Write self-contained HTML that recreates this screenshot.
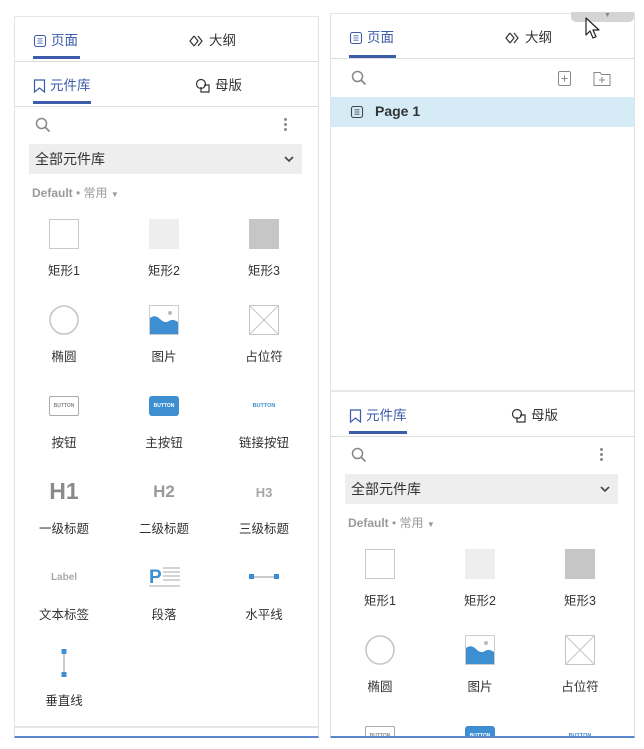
<!DOCTYPE html>
<html><head><meta charset="utf-8"><style>
*{margin:0;padding:0;box-sizing:border-box}
html,body{width:644px;height:749px;overflow:hidden}
body{background:#fff;position:relative;font-family:"Liberation Sans","Noto Sans CJK SC",sans-serif;color:#333}
.abs{position:absolute}
.panel{position:absolute;border-left:1px solid #e2e2e2;border-right:1px solid #e2e2e2;border-top:1px solid #e6e6e6;overflow:hidden}
.tabs{position:absolute;left:0;width:304px;height:45px;border-bottom:1px solid #ddd}
.tab{position:absolute;top:15px;font-size:13.5px;line-height:18px;display:flex;align-items:center;gap:4px}
.tab.on{color:#3c5ba8}
.ul{position:absolute;top:39px;height:3px;background:#3c5ba8}
.lbl{position:absolute;width:100px;text-align:center;font-size:12.5px;color:#333}
.ic{position:absolute}
</style></head><body>

<!-- LEFT PANEL -->
<div class="panel" style="left:14px;top:16px;width:305px;height:722px;border-bottom:2px solid #5b86c9">
  <div class="tabs" style="top:0">
    <div class="tab on" style="left:18px"><svg width="14" height="14" viewBox="0 0 14 14"><rect x="1.5" y="1.5" width="11" height="11" rx="2" fill="none" stroke="#3c5ba8" stroke-width="1.1"/><path d="M4.5 4.8h5M4.5 7h5M4.5 9.2h5" stroke="#3c5ba8" stroke-width="0.8"/></svg>页面</div>
    <div class="ul" style="left:18px;width:47px"></div>
    <div class="tab" style="left:174px"><svg width="16" height="12" viewBox="0 0 16 12"><path d="M5 1L1 6l4 5M9 1l4 5-4 5M5 1l4 5-4 5" fill="none" stroke="#333" stroke-width="1.2"/></svg>大纲</div>
  </div>
  <div style="position:absolute;left:0;top:45px;width:304px;height:665px">
    <div class="tabs" style="top:0">
      <div class="tab on" style="left:18px"><svg width="13" height="14" viewBox="0 0 13 14"><path d="M1.5 1h10v12l-5-4-5 4z" fill="none" stroke="#3c5ba8" stroke-width="1.2"/></svg>元件库</div>
      <div class="ul" style="left:18px;width:58px"></div>
      <div class="tab" style="left:180px"><svg width="16" height="16" viewBox="0 0 16 16"><circle cx="6" cy="6" r="4.5" fill="none" stroke="#333" stroke-width="1.2"/><path d="M6 9v5h8V7h-5" fill="none" stroke="#333" stroke-width="1.2"/></svg>母版</div>
    </div>
    LIBL
  </div>
  <div class="abs" style="left:0;top:709px;width:304px;height:2px;background:#e6e6e6"></div>
</div>

<!-- RIGHT PANEL -->
<div class="panel" style="left:330px;top:13px;width:305px;height:725px;border-bottom:2px solid #5b86c9">
  <div class="tabs" style="top:0">
    <div class="tab on" style="left:18px"><svg width="14" height="14" viewBox="0 0 14 14"><rect x="1.5" y="1.5" width="11" height="11" rx="2" fill="none" stroke="#3c5ba8" stroke-width="1.1"/><path d="M4.5 4.8h5M4.5 7h5M4.5 9.2h5" stroke="#3c5ba8" stroke-width="0.8"/></svg>页面</div>
    <div class="ul" style="left:18px;width:47px;top:41px"></div>
    <div class="tab" style="left:174px"><svg width="16" height="12" viewBox="0 0 16 12"><path d="M5 1L1 6l4 5M9 1l4 5-4 5M5 1l4 5-4 5" fill="none" stroke="#333" stroke-width="1.2"/></svg>大纲</div>
  </div>
  <svg class="ic" style="left:20px;top:56px" width="16" height="16" viewBox="0 0 16 16"><circle cx="6.5" cy="6.5" r="5" fill="none" stroke="#888" stroke-width="1.5"/><path d="M10 10l4.5 4.5" stroke="#888" stroke-width="1.7"/></svg>
  <svg class="ic" style="left:227px;top:57px" width="13" height="15" viewBox="0 0 13 15"><rect x="0.5" y="0.5" width="12" height="14" rx="1.5" fill="none" stroke="#888"/><path d="M6.5 4.5v6M3.5 7.5h6" stroke="#888"/></svg>
  <svg class="ic" style="left:262px;top:57px" width="18" height="15" viewBox="0 0 18 15"><path d="M1 1.5h6l1.5 2H17v11H1z" fill="none" stroke="#888"/><path d="M9 6v6M6 9h6" stroke="#888"/></svg>
  <div class="abs" style="left:0;top:83px;width:304px;height:30px;background:#d5ecf7"></div>
  <svg class="ic" style="left:19px;top:91px" width="14" height="14" viewBox="0 0 14 14"><rect x="1.5" y="1.5" width="11" height="11" rx="2" fill="none" stroke="#444" stroke-width="1.1"/><path d="M4.5 4.8h5M4.5 7h5M4.5 9.2h5" stroke="#444" stroke-width="0.8"/></svg>
  <div class="abs" style="left:44px;top:89px;font-size:14px;font-weight:bold;color:#333">Page 1</div>
  <div class="abs" style="left:0;top:376px;width:304px;height:2px;background:#e8e8e8"></div>
  <div style="position:absolute;left:0;top:378px;width:304px;height:345px;overflow:hidden">
    <div class="tabs" style="top:0">
      <div class="tab on" style="left:18px"><svg width="13" height="14" viewBox="0 0 13 14"><path d="M1.5 1h10v12l-5-4-5 4z" fill="none" stroke="#3c5ba8" stroke-width="1.2"/></svg>元件库</div>
      <div class="ul" style="left:18px;width:58px"></div>
      <div class="tab" style="left:180px"><svg width="16" height="16" viewBox="0 0 16 16"><circle cx="6" cy="6" r="4.5" fill="none" stroke="#333" stroke-width="1.2"/><path d="M6 9v5h8V7h-5" fill="none" stroke="#333" stroke-width="1.2"/></svg>母版</div>
    </div>
    LIBR
  </div>
</div>
<div class="abs" style="left:571px;top:12px;width:63px;height:10px;background:#d4d4d4;border-radius:0 0 5px 5px;font-size:7px;color:#888;text-align:center;line-height:8px;padding-left:10px">▼</div>
<svg class="abs" style="left:585px;top:17px" width="16" height="24" viewBox="0 0 16 24"><path d="M1 1v17l4-4 3 7 3-1.3-3-6.7h6z" fill="#fff" stroke="#222" stroke-width="1.2" stroke-linejoin="round"/></svg>

<script>
var lib=`
<svg class="ic" style="left:20px;top:55px" width="16" height="16" viewBox="0 0 16 16"><circle cx="6.5" cy="6.5" r="5" fill="none" stroke="#888" stroke-width="1.5"/><path d="M10 10l4.5 4.5" stroke="#888" stroke-width="1.7"/></svg>
<div class="abs" style="left:269px;top:56px;width:3px;height:3px;border-radius:50%;background:#888;box-shadow:0 5px 0 #888,0 10px 0 #888"></div>
<div class="abs" style="left:14px;top:82px;width:273px;height:30px;background:#eeeeee;font-size:14px;line-height:30px;padding-left:6px;color:#333">全部元件库<svg style="position:absolute;right:8px;top:12px" width="10" height="7" viewBox="0 0 10 7"><path d="M1 1l4 4 4-4" fill="none" stroke="#444" stroke-width="1.6"/></svg></div>
<div class="abs" style="left:17px;top:122px;font-size:12px;font-weight:bold;color:#9a9a9a">Default <span style="font-weight:normal">• 常用 <span style="font-size:8px">▼</span></span></div>
<div class="abs" style="left:34px;top:157px;width:30px;height:30px;border:1px solid #c8c8c8"></div>
<div class="abs" style="left:134px;top:157px;width:30px;height:30px;background:#eeeeee"></div>
<div class="abs" style="left:234px;top:157px;width:30px;height:30px;background:#c6c6c6"></div>
<div class="lbl" style="left:-1px;top:198px">矩形1</div><div class="lbl" style="left:99px;top:198px">矩形2</div><div class="lbl" style="left:199px;top:198px">矩形3</div>
<svg class="ic" style="left:34px;top:243px" width="30" height="30"><circle cx="15" cy="15" r="14" fill="none" stroke="#c6c6c6" stroke-width="1.6"/></svg>
<svg class="ic" style="left:134px;top:243px" width="30" height="30" viewBox="0 0 30 30"><rect x="0.5" y="0.5" width="29" height="29" fill="#fff" stroke="#ccc"/><path d="M1 13c4-3 7-2 10 1s6 4 9 2 6-1 9 1v12H1z" fill="#3d8fd1"/><circle cx="21" cy="8" r="2" fill="#bbb"/></svg>
<svg class="ic" style="left:234px;top:243px" width="30" height="30" viewBox="0 0 30 30"><rect x="0.5" y="0.5" width="29" height="29" fill="none" stroke="#c6c6c6"/><path d="M1 1l28 28M29 1L1 29" stroke="#c6c6c6"/></svg>
<div class="lbl" style="left:-1px;top:284px">椭圆</div><div class="lbl" style="left:99px;top:284px">图片</div><div class="lbl" style="left:199px;top:284px">占位符</div>
<div class="abs" style="left:34px;top:334px;width:30px;height:20px;border:1px solid #aaa;border-radius:2px;font-size:5px;color:#888;text-align:center;line-height:18px;font-weight:bold">BUTTON</div>
<div class="abs" style="left:134px;top:334px;width:30px;height:20px;background:#3d8fd1;border-radius:3px;font-size:5px;color:#fff;text-align:center;line-height:20px;font-weight:bold">BUTTON</div>
<div class="abs" style="left:234px;top:334px;width:30px;height:20px;font-size:5.5px;color:#3d8fd1;text-align:center;line-height:20px;font-weight:bold">BUTTON</div>
<div class="lbl" style="left:-1px;top:370px">按钮</div><div class="lbl" style="left:99px;top:370px">主按钮</div><div class="lbl" style="left:199px;top:370px">链接按钮</div>
<div class="abs" style="left:-1px;top:416px;width:100px;text-align:center;font-size:23px;font-weight:bold;color:#8a8a8a">H1</div>
<div class="abs" style="left:99px;top:420px;width:100px;text-align:center;font-size:17px;font-weight:bold;color:#9a9a9a">H2</div>
<div class="abs" style="left:199px;top:423px;width:100px;text-align:center;font-size:13px;font-weight:bold;color:#a5a5a5">H3</div>
<div class="lbl" style="left:-1px;top:456px">一级标题</div><div class="lbl" style="left:99px;top:456px">二级标题</div><div class="lbl" style="left:199px;top:456px">三级标题</div>
<div class="abs" style="left:-1px;top:510px;width:100px;text-align:center;font-size:10px;font-weight:bold;color:#aaa">Label</div>
<svg class="ic" style="left:134px;top:504px" width="31" height="24" viewBox="0 0 31 24"><text x="0" y="17" font-family="Liberation Sans" font-weight="bold" font-size="19" fill="#3d8fd1">P</text><path d="M14 2h17M14 6h17M14 10h17M14 14h17M0 20h31" stroke="#aaa" stroke-width="0.9"/></svg>
<svg class="ic" style="left:234px;top:510px" width="30" height="10"><path d="M3 5h24" stroke="#999"/><rect x="0" y="2" width="5" height="5" fill="#3d8fd1"/><rect x="25" y="2" width="5" height="5" fill="#3d8fd1"/></svg>
<div class="lbl" style="left:-1px;top:542px">文本标签</div><div class="lbl" style="left:99px;top:542px">段落</div><div class="lbl" style="left:199px;top:542px">水平线</div>
<svg class="ic" style="left:45px;top:587px" width="8" height="28"><path d="M4 3v22" stroke="#999"/><rect x="1.5" y="0" width="5" height="5" fill="#3d8fd1"/><rect x="1.5" y="23" width="5" height="5" fill="#3d8fd1"/></svg>
<div class="lbl" style="left:-1px;top:628px">垂直线</div>
`;
document.body.innerHTML=document.body.innerHTML.replace('LIBL',lib).replace('LIBR',lib);
</script>
</body></html>
